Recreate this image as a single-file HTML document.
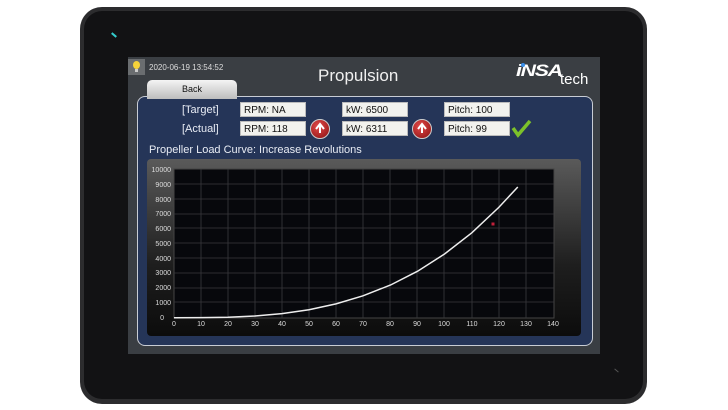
<!DOCTYPE html><html><head><style>
*{margin:0;padding:0;box-sizing:border-box}
body{width:728px;height:410px;background:#fff;position:relative;overflow:hidden;font-family:"Liberation Sans",sans-serif}
.a{position:absolute}
.box{position:absolute;background:#f2f2ee;color:#111;font-size:10px;line-height:15px;padding-left:3px;height:15px;border:1px solid #bbb}
.lbl{position:absolute;color:#e8ecf4;font-size:11px}
.up{position:absolute;width:20px;height:20px;border-radius:50%;background:radial-gradient(circle at 40% 35%,#e24a4a,#8a1010);border:1px solid #ccc}
</style></head><body>
<div class="a" style="left:80px;top:7px;width:567px;height:397px;border-radius:22px;background:#2c2c2e"></div>
<div class="a" style="left:84px;top:11px;width:559px;height:388px;border-radius:18px;background:#121214"></div>
<div class="a" style="left:111px;top:34px;width:6px;height:2px;background:#3cc;transform:rotate(40deg)"></div>
<div class="a" style="left:614px;top:370px;width:5px;height:1px;background:#555;transform:rotate(40deg)"></div>
<div class="a" style="left:128px;top:57px;width:472px;height:297px;background:#3a3e43"></div>
<div class="a" style="left:128px;top:59px;width:17px;height:16px;background:#6a6d70"></div>
<div class="a" style="left:133px;top:61px;width:7px;height:8px;border-radius:50%;background:#f5d23a"></div>
<div class="a" style="left:135px;top:69px;width:3px;height:3px;background:#ccc"></div>
<div class="a" style="left:149px;top:63px;font-size:8px;color:#ddd">2020-06-19 13:54:52</div>
<div class="a" style="left:318px;top:66px;font-size:17px;color:#f0f0f0">Propulsion</div>
<div class="a" style="left:516px;top:61px;font-size:17px;font-style:italic;font-weight:bold;color:#fff;letter-spacing:-1px;transform:scaleX(1.25);transform-origin:left">iNSA</div>
<div class="a" style="left:521px;top:63px;width:4px;height:4px;border-radius:50%;background:#3a8ee8"></div>
<div class="a" style="left:560px;top:71px;font-size:15px;color:#fff">tech</div>
<div class="a" style="left:137px;top:96px;width:456px;height:250px;border-radius:8px;background:#253558;border:1px solid #c8ccd4"></div>
<div class="a" style="left:147px;top:80px;width:90px;height:19px;border-radius:5px 5px 0 0;background:linear-gradient(#f4f4f4,#bdbdbd);font-size:9px;text-align:center;line-height:19px;color:#111">Back</div>
<div class="lbl" style="left:182px;top:104px">[Target]</div>
<div class="lbl" style="left:182px;top:123px">[Actual]</div>
<div class="box" style="left:240px;top:102px;width:66px">RPM: NA</div>
<div class="box" style="left:240px;top:121px;width:66px">RPM: 118</div>
<div class="box" style="left:342px;top:102px;width:66px">kW: 6500</div>
<div class="box" style="left:342px;top:121px;width:66px">kW: 6311</div>
<div class="box" style="left:444px;top:102px;width:66px">Pitch: 100</div>
<div class="box" style="left:444px;top:121px;width:66px">Pitch: 99</div>
<div class="up" style="left:310px;top:119px"></div>
<div class="up" style="left:412px;top:119px"></div>
<svg class="a" style="left:0;top:0" width="728" height="410">
<path d="M316 129l4-5 4 5M320 124v9" stroke="#fff" stroke-width="2" fill="none"/>
<path d="M418 129l4-5 4 5M422 124v9" stroke="#fff" stroke-width="2" fill="none"/>
<path d="M513 128l5 7 12-14" stroke="#7cc12a" stroke-width="3.5" fill="none"/>
</svg>
<div class="lbl" style="left:149px;top:144px;font-size:11px">Propeller Load Curve: Increase Revolutions</div>
<div class="a" style="left:147px;top:159px;width:434px;height:177px;border-radius:4px;background:linear-gradient(#5a5a5a,#1e1e1e 60%,#0c0c0c)"></div>
<svg class="a" style="left:0;top:0" width="728" height="410">
<rect x="174" y="169" width="380" height="149" fill="#07080c" stroke="#444"/>
<g stroke="#3a3a3e" stroke-width="0.8">
<path d="M201 169v149M228 169v149M255 169v149M282 169v149M309 169v149M336 169v149M363 169v149M390 169v149M417 169v149M444 169v149M472 169v149M499 169v149M526 169v149"/>
<path d="M174 184h380M174 199h380M174 214h380M174 228h380M174 243h380M174 258h380M174 273h380M174 288h380M174 302h380"/>
</g>
<path d="M174 317.7L201 317.6L228 317.2L255 316L282 313.6L309 309.7L336 303.9L363 295.8L390.6 285L417.6 271.2L444.7 253.9L471.8 232.8L498.8 207.4L517.8 187" stroke="#eee" stroke-width="1.5" fill="none"/>
<rect x="491.5" y="222.5" width="3" height="3" fill="#c0203a"/>
<g fill="#ddd" font-size="7" font-family="Liberation Sans" text-anchor="end">
<text x="171" y="172">10000</text><text x="171" y="187">9000</text><text x="171" y="202">8000</text><text x="171" y="216">7000</text><text x="171" y="231">6000</text><text x="171" y="246">5000</text><text x="171" y="261">4000</text><text x="171" y="275">3000</text><text x="171" y="290">2000</text><text x="171" y="305">1000</text><text x="164" y="320">0</text>
</g>
<g fill="#ddd" font-size="7" font-family="Liberation Sans" text-anchor="middle">
<text x="174" y="326">0</text><text x="201" y="326">10</text><text x="228" y="326">20</text><text x="255" y="326">30</text><text x="282" y="326">40</text><text x="309" y="326">50</text><text x="336" y="326">60</text><text x="363" y="326">70</text><text x="390" y="326">80</text><text x="417" y="326">90</text><text x="444" y="326">100</text><text x="472" y="326">110</text><text x="499" y="326">120</text><text x="526" y="326">130</text><text x="553" y="326">140</text>
</g>
</svg>
</body></html>
